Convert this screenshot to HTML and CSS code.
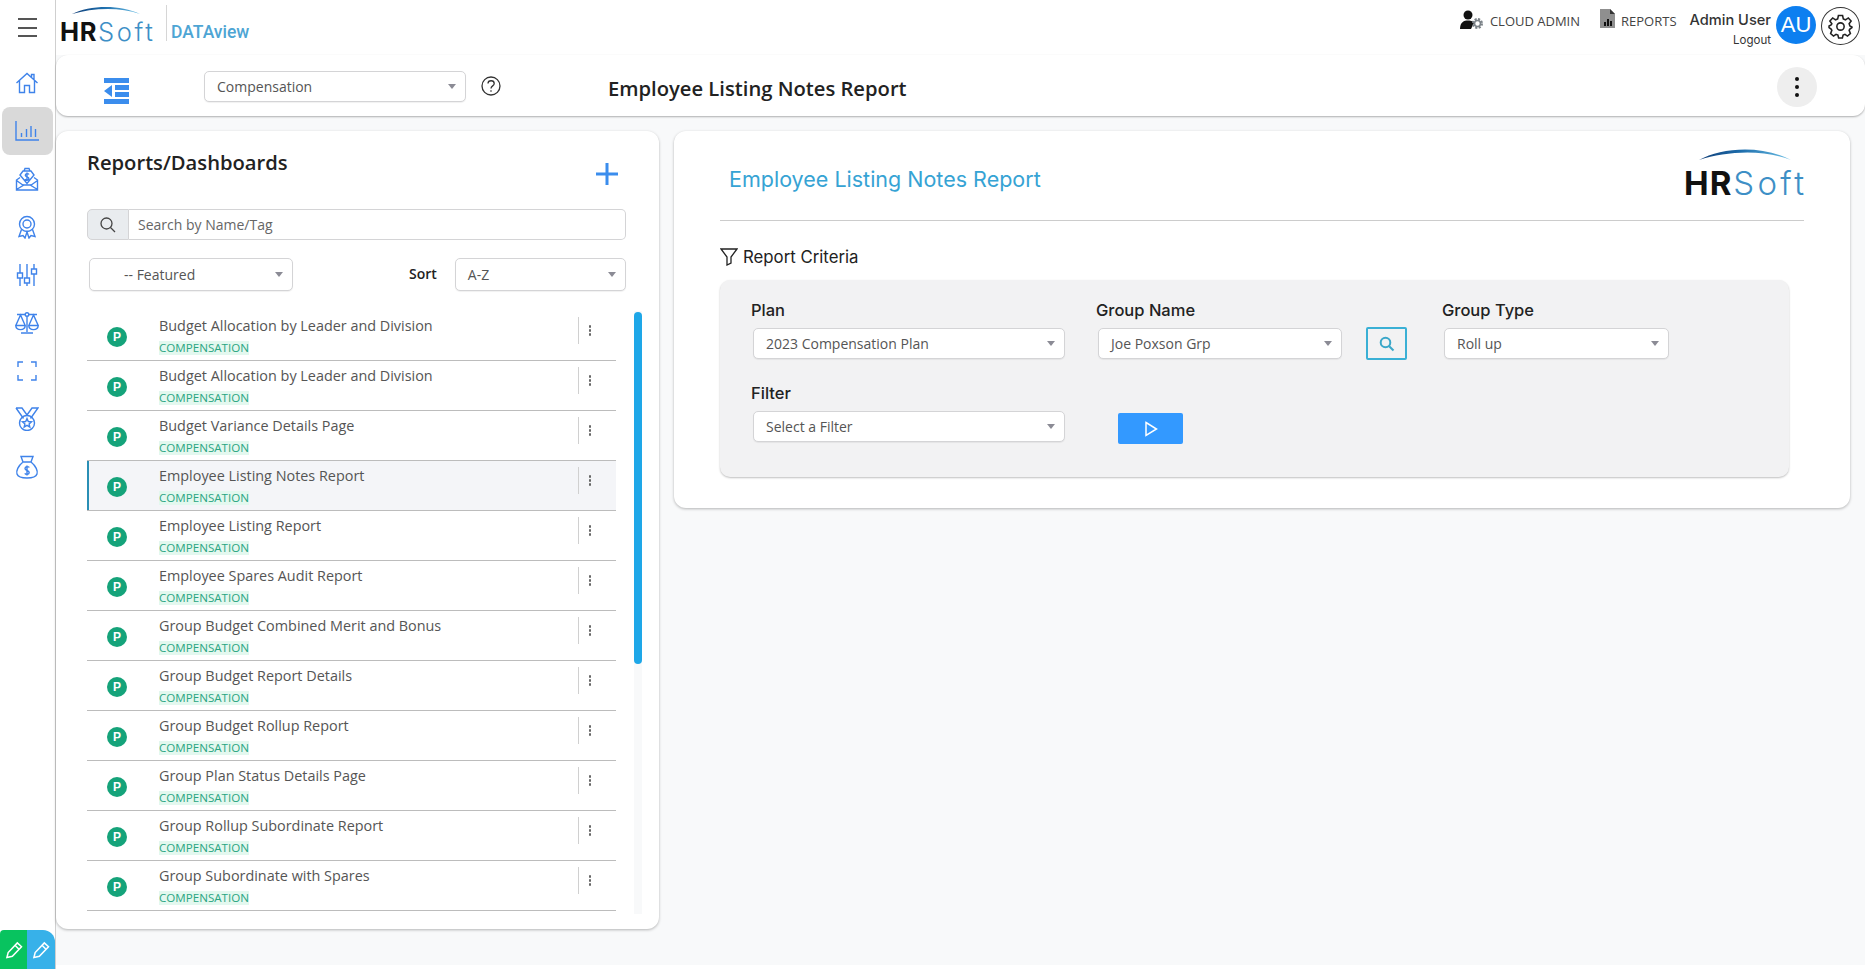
FILE: index.html
```html
<!DOCTYPE html>
<html lang="en">

<head>
    <meta charset="UTF-8">
    <title>HRSoft DATAview</title>
    <link rel="stylesheet" href="styles.css">
</head>

<body>
    <svg class="defs" width="0" height="0">
        <defs>
            <linearGradient id="arc" x1="0" x2="1" y1="0" y2="0">
                <stop offset="0" stop-color="#123f78" />
                <stop offset="0.45" stop-color="#1c6cab" />
                <stop offset="1" stop-color="#6cc0e6" />
            </linearGradient>
        </defs>
    </svg>

    <aside class="sidebar">
        <button class="hamburger"><span></span><span></span><span></span></button>
        <nav class="nav">
            <a class="nav-item">
                <svg viewBox="0 0 24 24"><path d="M1.5 12 12 2.5 22.5 12M4.5 9.5V21.5H9.5V14.5H14.5V21.5H19.5V9.5M16.5 6V3.5H19V8.2" /></svg>
            </a>
            <a class="nav-item active">
                <svg viewBox="0 0 24 24"><path d="M1 2V21H24M6.500 18V14M11.500 18V10M16 18V7M20.500 18V10" /></svg>
            </a>
            <a class="nav-item">
                <svg viewBox="0 0 24 24"><path d="M5 10.500 1.500 13V23H22.500V13L19 10.500M1.500 13.500 8.500 18.500M22.500 13.500 15.500 18.500M1.500 22.500 9 18H15L22.500 22.500M5 8 12 16.500 19 8 16 4H8ZM9 4 10 1.500H14L15 4M14 7.500C13.300 6.200 10.300 6.300 10.300 8.200S13.900 9.800 13.900 11.700 10.800 13.600 10 12.200M12 5.500V14" /></svg>
            </a>
            <a class="nav-item">
                <svg viewBox="0 0 24 24"><circle cx="12" cy="9" r="7.500" /><circle cx="12" cy="9" r="4" /><path d="M6.500 14.500 4 21.500 8 20.500 10 23 12 17 14 23 16 20.500 20 21.500 17.500 14.500" /></svg>
            </a>
            <a class="nav-item">
                <svg viewBox="0 0 24 24"><path d="M5 1V10M5 15V23M12 1V15M12 20V23M19 1V6M19 11V23M2.5 10H7.500V15H2.500ZM9.500 15H14.500V20H9.500ZM16.500 6H21.500V11H16.500Z" /></svg>
            </a>
            <a class="nav-item">
                <svg viewBox="0 0 24 24"><circle cx="12" cy="3.500" r="1.800" /><path d="M12 5.300V21M6 22H18M2 3.500H10M14 3.500H22M5.500 4 .8 14.500H10.200ZM18.500 4 13.800 14.500H23.200ZM.8 14.500C1 20 10 20 10.200 14.500M13.800 14.500C14 20 23 20 23.200 14.500" /></svg>
            </a>
            <a class="nav-item">
                <svg viewBox="0 0 24 24"><path d="M3 8V3H8M16 3H21V8M21 16V21H16M8 21H3V16" /></svg>
            </a>
            <a class="nav-item">
                <svg viewBox="0 0 24 24"><path d="M1 1H7L12 8 17 1H23L15.500 11.500M1 1 8.500 11.500" /><circle cx="12" cy="16" r="7.500" /><path d="M12 11.500 13.300 14.500 16.500 14.800 14.100 16.900 14.800 20 12 18.400 9.200 20 9.900 16.900 7.500 14.800 10.700 14.500Z" /></svg>
            </a>
            <a class="nav-item">
                <svg viewBox="0 0 24 24"><path d="M8 7 6 1.500H18L16 7M8 7H16M8 7C3 11 1 16 2 19S6 23 12 23 21 22 22 19 21 11 16 7M14.300 12.500C13.500 11.200 10 11.300 10 13.500S14.200 15.300 14.200 17.500 10.700 19.800 9.800 18.300M12 10.500V20.500" /></svg>
            </a>
        </nav>
        <div class="edit-buttons">
            <a class="edit-btn green">
                <svg viewBox="0 0 24 24"><path d="M3.500 21 5 15 16 3.500 21 8 10 19.500ZM13.500 6.500 18 11" /></svg>
            </a>
            <a class="edit-btn blue">
                <svg viewBox="0 0 24 24"><path d="M3.500 21 5 15 16 3.500 21 8 10 19.500ZM13.500 6.500 18 11" /></svg>
            </a>
        </div>
    </aside>

    <div class="page">
        <header class="topbar">
            <div class="brand">
                <div class="logo logo-small">
                    <svg class="logo-arc" viewBox="0 0 100 12" preserveAspectRatio="none"><path d="M0 12C25 -1 70 -3 100 12 70 1 30 3 0 12Z" fill="url(#arc)" /></svg>
                    <div class="logo-text"><b>HR</b><span>Soft</span></div>
                </div>
                <div class="brand-divider"></div>
                <div class="brand-name">DATAview</div>
            </div>
            <div class="top-links">
                <a class="top-link top-link-admin">
                    <svg class="icon-person" viewBox="0 0 24 20">
                        <circle cx="8" cy="5" r="4.500" fill="#111" />
                        <path d="M0 19C0 12 4 10.500 8 10.500S13 11.500 14 13L11 19Z" fill="#111" />
                        <circle cx="17.500" cy="13.500" r="4.200" fill="none" stroke="#7b8288" stroke-width="2.600" stroke-dasharray="2 1.300" />
                        <circle cx="17.500" cy="13.500" r="3" fill="none" stroke="#7b8288" stroke-width="1.600" />
                    </svg>
                    CLOUD ADMIN
                </a>
                <a class="top-link top-link-reports">
                    <svg class="icon-report" viewBox="0 0 15 19">
                        <path d="M0 0H10L15 5V19H0Z" fill="#8f8f8f" />
                        <path d="M10 0 15 5H10Z" fill="#333" />
                        <path d="M4 13H6V17H4ZM7 10H9V17H7ZM10 12H12V17H10Z" fill="#111" />
                    </svg>
                    REPORTS
                </a>
                <div class="user">
                    <div class="user-name">Admin User</div>
                    <div class="user-logout">Logout</div>
                </div>
                <div class="avatar">AU</div>
                <button class="gear">
                    <svg viewBox="0 0 24 24"><circle cx="12" cy="12" r="3.500" /><path d="M10 1.500H14L14.700 4.700 16.800 5.600 19.500 3.800 22.200 6.800 20.300 9.300 21 11.500 23 12.500V13L21 14.500 20.300 15.700 21.500 18.700 18.700 21.200 16.300 19.500 14.500 20.300 13.800 23H10.200L9.500 20.300 7.700 19.500 5.300 21.200 2.500 18.700 3.700 15.700 3 14.500 1 13V11.500L3 10.500 3.700 9.300 1.800 6.800 4.500 3.800 7.200 5.600 9.300 4.700Z" /></svg>
                </button>
            </div>
        </header>

        <div class="toolbar">
            <svg class="collapse-icon" viewBox="0 0 25 26"><path d="M0 0H25V5H0ZM11 7H25V12H11ZM11 14H25V19H11ZM0 21H25V26H0ZM8 7V19L0 13Z" /></svg>
            <div class="select toolbar-select"><span>Compensation</span><i class="caret"></i></div>
            <svg class="help-icon" viewBox="0 0 20 20"><circle cx="10" cy="10" r="9" /><path d="M7 7.500C7 3.800 13.200 3.800 13.200 7.500 13.200 10 10 9.800 10 12.500M10 14.300V15.800" /></svg>
            <h1 class="toolbar-title">Employee Listing Notes Report</h1>
            <button class="kebab-round"><span></span><span></span><span></span></button>
        </div>

        <main class="content">
            <section class="panel reports">
                <div class="reports-head">
                    <h2>Reports/Dashboards</h2>
                    <svg class="plus-icon" viewBox="0 0 22 22"><path d="M11 0V22M0 11H22" /></svg>
                </div>
                <div class="search">
                    <div class="search-addon">
                        <svg viewBox="0 0 16 16"><circle cx="6.500" cy="6.500" r="5.500" /><path d="M10.500 10.500 15 15" /></svg>
                    </div>
                    <div class="search-input">Search by Name/Tag</div>
                </div>
                <div class="filters">
                    <div class="select featured"><span>-- Featured</span><i class="caret"></i></div>
                    <div class="sort-label">Sort</div>
                    <div class="select sort"><span>A-Z</span><i class="caret"></i></div>
                </div>
                <div class="list-wrap">
                    <ul class="list">
                        <li class="row"><span class="badge">P</span><div class="row-text"><div class="row-name">Budget Allocation by Leader and Division</div><span class="tag">COMPENSATION</span></div><div class="row-menu"><i></i><i></i><i></i></div></li>
                        <li class="row"><span class="badge">P</span><div class="row-text"><div class="row-name">Budget Allocation by Leader and Division</div><span class="tag">COMPENSATION</span></div><div class="row-menu"><i></i><i></i><i></i></div></li>
                        <li class="row"><span class="badge">P</span><div class="row-text"><div class="row-name">Budget Variance Details Page</div><span class="tag">COMPENSATION</span></div><div class="row-menu"><i></i><i></i><i></i></div></li>
                        <li class="row selected"><span class="badge">P</span><div class="row-text"><div class="row-name">Employee Listing Notes Report</div><span class="tag">COMPENSATION</span></div><div class="row-menu"><i></i><i></i><i></i></div></li>
                        <li class="row"><span class="badge">P</span><div class="row-text"><div class="row-name">Employee Listing Report</div><span class="tag">COMPENSATION</span></div><div class="row-menu"><i></i><i></i><i></i></div></li>
                        <li class="row"><span class="badge">P</span><div class="row-text"><div class="row-name">Employee Spares Audit Report</div><span class="tag">COMPENSATION</span></div><div class="row-menu"><i></i><i></i><i></i></div></li>
                        <li class="row"><span class="badge">P</span><div class="row-text"><div class="row-name">Group Budget Combined Merit and Bonus</div><span class="tag">COMPENSATION</span></div><div class="row-menu"><i></i><i></i><i></i></div></li>
                        <li class="row"><span class="badge">P</span><div class="row-text"><div class="row-name">Group Budget Report Details</div><span class="tag">COMPENSATION</span></div><div class="row-menu"><i></i><i></i><i></i></div></li>
                        <li class="row"><span class="badge">P</span><div class="row-text"><div class="row-name">Group Budget Rollup Report</div><span class="tag">COMPENSATION</span></div><div class="row-menu"><i></i><i></i><i></i></div></li>
                        <li class="row"><span class="badge">P</span><div class="row-text"><div class="row-name">Group Plan Status Details Page</div><span class="tag">COMPENSATION</span></div><div class="row-menu"><i></i><i></i><i></i></div></li>
                        <li class="row"><span class="badge">P</span><div class="row-text"><div class="row-name">Group Rollup Subordinate Report</div><span class="tag">COMPENSATION</span></div><div class="row-menu"><i></i><i></i><i></i></div></li>
                        <li class="row"><span class="badge">P</span><div class="row-text"><div class="row-name">Group Subordinate with Spares</div><span class="tag">COMPENSATION</span></div><div class="row-menu"><i></i><i></i><i></i></div></li>
                    </ul>
                    <div class="scroll-track"><div class="scroll-thumb"></div></div>
                </div>
            </section>

            <section class="panel report">
                <div class="report-head">
                    <h2>Employee Listing Notes Report</h2>
                    <div class="logo logo-large">
                        <svg class="logo-arc" viewBox="0 0 100 12" preserveAspectRatio="none"><path d="M0 12C25 -1 70 -3 100 12 70 1 30 3 0 12Z" fill="url(#arc)" /></svg>
                        <div class="logo-text"><b>HR</b><span>Soft</span></div>
                    </div>
                </div>
                <div class="criteria-title">
                    <svg viewBox="0 0 18 18"><path d="M1 1H17L11 9V15L7 17V9Z" /></svg>
                    Report Criteria
                </div>
                <div class="criteria">
                    <div class="criteria-row">
                        <div class="field field-plan">
                            <label>Plan</label>
                            <div class="select"><span>2023 Compensation Plan</span><i class="caret"></i></div>
                        </div>
                        <div class="field field-group">
                            <label>Group Name</label>
                            <div class="select"><span>Joe Poxson Grp</span><i class="caret"></i></div>
                        </div>
                        <button class="search-btn">
                            <svg viewBox="0 0 16 16"><circle cx="6.500" cy="6.500" r="4.800" /><path d="M10.200 10.200 14.500 14.500" /></svg>
                        </button>
                        <div class="field field-type">
                            <label>Group Type</label>
                            <div class="select"><span>Roll up</span><i class="caret"></i></div>
                        </div>
                    </div>
                    <div class="criteria-row criteria-row-second">
                        <div class="field field-plan">
                            <label>Filter</label>
                            <div class="select"><span>Select a Filter</span><i class="caret"></i></div>
                        </div>
                        <button class="run-btn">
                            <svg viewBox="0 0 14 16"><path d="M2 1.500 12.500 8 2 14.500Z" /></svg>
                        </button>
                    </div>
                </div>
            </section>
        </main>
    </div>
</body>

</html>
```

FILE: styles.css
```css
* {
    box-sizing: border-box;
}

html,
body {
    height: 969px;
    margin: 0;
    overflow: hidden;
}

body {
    background-color: #fff;
    color: #222;
    display: flex;
    font-family: "Open Sans", Arial, sans-serif;
    font-size: 14px;
}

h1,
h2,
ul {
    margin: 0;
    padding: 0;
}

button {
    background: none;
    border: 0;
    padding: 0;
}

.defs {
    position: absolute;
}

/* sidebar */
.sidebar {
    border-right: 1px solid #cfcfcf;
    display: flex;
    flex: 0 0 56px;
    flex-direction: column;
    height: 969px;
}

.hamburger {
    display: flex;
    flex-direction: column;
    gap: 6.500px;
    height: 59px;
    margin-left: 18px;
    padding-top: 18px;
    width: 19px;
}

.hamburger span {
    background-color: #555;
    display: block;
    height: 2px;
    width: 19px;
}

.nav {
    display: flex;
    flex-direction: column;
}

.nav-item {
    align-items: center;
    border-radius: 8px;
    display: flex;
    height: 48px;
    justify-content: center;
    margin: 0 2px;
    width: 51px;
}

.nav-item.active {
    background-color: #d9d9d9;
}

.nav-item svg {
    fill: none;
    height: 24px;
    margin-right: 2px;
    stroke: #3f83ea;
    stroke-width: 1.400;
    width: 24px;
}

.edit-buttons {
    display: flex;
    height: 39px;
    margin-top: auto;
    width: 55px;
}

.edit-btn {
    align-items: center;
    display: flex;
    flex: 0 0 27px;
    justify-content: center;
}

.edit-btn svg {
    fill: none;
    height: 20px;
    stroke: #fff;
    stroke-width: 1.800;
    width: 20px;
}

.edit-btn.green {
    background-color: #08c35f;
    border-top-left-radius: 4px;
}

.edit-btn.blue {
    background-color: #37b1e9;
    border-top-right-radius: 12px;
    flex-basis: 28px;
}

/* header */
.page {
    background-color: #f8f9fa;
    display: flex;
    flex: 1;
    flex-direction: column;
    height: 965px;
    min-width: 0;
}

.topbar {
    align-items: flex-start;
    background-color: #fff;
    display: flex;
    flex: 0 0 55px;
    justify-content: space-between;
}

.brand {
    align-items: flex-start;
    display: flex;
    padding-left: 4px;
}

.logo {
    display: flex;
    flex-direction: column;
}

.logo-small {
    padding-top: 6px;
    width: 95px;
}

.logo-small .logo-arc {
    height: 8px;
    margin-left: 12px;
    width: 68px;
}

.logo-small .logo-text {
    font-size: 25.500px;
    line-height: 29px;
    margin-top: 3px;
}

.logo-large {
    width: 120px;
}

.logo-large .logo-arc {
    height: 12px;
    margin-left: 15px;
    width: 92px;
}

.logo-large .logo-text {
    font-size: 33px;
    line-height: 40px;
    margin-top: 3px;
}

.logo-arc {
    display: block;
}

.logo-text {
    display: flex;
    font-family: Inter, Arial, sans-serif;
    white-space: nowrap;
}

.logo-text b {
    color: #111;
    font-weight: 700;
    letter-spacing: .03em;
}

.logo-text span {
    color: #3d8fc6;
    font-weight: 300;
    letter-spacing: .1em;
    margin-left: .03em;
}

.brand-divider {
    background-color: #d6d6d6;
    height: 36px;
    margin: 5px 0 0 11px;
    width: 1px;
}

.brand-name {
    color: #4ea5d4;
    font-family: Roboto, Arial, sans-serif;
    font-size: 17.500px;
    font-weight: 500;
    line-height: 22px;
    margin: 21px 0 0 4px;
}

.top-links {
    align-items: flex-start;
    display: flex;
    padding-right: 5px;
}

.top-link {
    align-items: center;
    color: #444;
    display: flex;
    font-size: 13px;
    gap: 6px;
    height: 20px;
    margin-top: 11px;
}

.icon-person {
    height: 20px;
    margin-top: -3px;
    width: 24px;
}

.icon-report {
    height: 19px;
    margin-top: -5px;
    width: 15px;
}

.top-link-reports {
    margin-left: 20px;
}

.user {
    font-family: Inter, Arial, sans-serif;
    margin-left: 13px;
    text-align: right;
}

.user-name {
    color: #333;
    font-size: 14.600px;
    font-weight: 500;
    line-height: 20px;
    margin-top: 10px;
    white-space: nowrap;
}

.user-logout {
    color: #333;
    font-size: 11.500px;
    line-height: 16px;
    margin-top: 2px;
}

.avatar {
    align-items: center;
    background-color: #0d7ff0;
    border-radius: 50%;
    color: #fff;
    display: flex;
    font-family: Arial, "Liberation Sans", sans-serif;
    font-size: 22px;
    height: 38px;
    justify-content: center;
    margin: 6px 0 0 5px;
    width: 40px;
}

.gear {
    align-items: center;
    border: 1px solid #333;
    border-radius: 50%;
    display: flex;
    height: 38px;
    justify-content: center;
    margin: 7px 0 0 5px;
    width: 39px;
}

.gear svg {
    fill: none;
    height: 25px;
    stroke: #222;
    stroke-width: 1.500;
    width: 25px;
}

/* toolbar */
.toolbar {
    align-items: center;
    background-color: #fff;
    border-radius: 12px;
    box-shadow: 0 1px 2px rgba(0, 0, 0, .3);
    display: flex;
    flex: 0 0 61px;
    padding: 2px 48px 0 48px;
}

.collapse-icon {
    fill: #3b8ded;
    height: 26px;
    margin-top: 9px;
    width: 25px;
}

.select {
    align-items: center;
    background-color: #fff;
    border: 1px solid #d4d4d6;
    border-radius: 5px;
    box-shadow: 0 1px 1px rgba(0, 0, 0, .06);
    color: #555;
    display: flex;
    height: 31px;
    justify-content: space-between;
    padding: 0 9px 0 12px;
}

.caret {
    border-left: 4.500px solid transparent;
    border-right: 4.500px solid transparent;
    border-top: 5px solid #8b8b95;
    display: block;
    height: 0;
    width: 0;
}

.toolbar-select {
    margin-left: 75px;
    width: 262px;
}

.help-icon {
    fill: none;
    height: 20px;
    margin-left: 15px;
    margin-top: -2px;
    stroke: #333;
    stroke-width: 1.300;
    width: 20px;
}

.toolbar-title {
    color: #222;
    flex: 1;
    font-size: 20.200px;
    font-weight: 600;
    margin: 3px 0 0 107px;
}

.kebab-round {
    align-items: center;
    background-color: #eee;
    border-radius: 50%;
    display: flex;
    flex-direction: column;
    gap: 4px;
    height: 40px;
    justify-content: center;
    width: 40px;
}

.kebab-round span {
    background-color: #111;
    border-radius: 50%;
    height: 4px;
    width: 4px;
}

/* panels */
.content {
    align-items: flex-start;
    display: flex;
    gap: 15px;
    padding-top: 15px;
}

.panel {
    background-color: #fff;
    border-radius: 12px;
    box-shadow: 0 1px 3px rgba(0, 0, 0, .28);
}

.reports {
    flex: 0 0 603px;
    height: 798px;
    padding: 0 17px 0 31px;
}

.reports-head {
    display: flex;
    height: 78px;
    justify-content: space-between;
    padding: 17px 24px 0 0;
}

.reports-head h2 {
    font-size: 20.200px;
    font-weight: 600;
    line-height: 28px;
}

.plus-icon {
    fill: none;
    height: 22px;
    margin-top: 15px;
    stroke: #3b8ded;
    stroke-width: 3;
    width: 22px;
}

.search {
    display: flex;
    height: 31px;
    width: 539px;
}

.search-addon {
    align-items: center;
    background-color: #e9ecef;
    border: 1px solid #d4d4d6;
    border-radius: 5px 0 0 5px;
    display: flex;
    justify-content: center;
    width: 42px;
}

.search-addon svg {
    fill: none;
    height: 16px;
    stroke: #444;
    stroke-width: 1.300;
    width: 16px;
}

.search-input {
    align-items: center;
    border: 1px solid #d4d4d6;
    border-left: 0;
    border-radius: 0 5px 5px 0;
    color: #666;
    display: flex;
    flex: 1;
    padding-left: 9px;
}

.filters {
    align-items: center;
    display: flex;
    height: 33px;
    margin-top: 18px;
    padding-left: 2px;
    width: 539px;
}

.filters .select {
    height: 33px;
}

.featured {
    padding-left: 34px;
    width: 204px;
}

.sort-label {
    font-weight: 600;
    margin-left: 116px;
    margin-top: -3px;
}

.sort {
    margin-left: 18px;
    width: 171px;
}

.list-wrap {
    display: flex;
    height: 603px;
    margin-top: 20px;
}

.list {
    flex: 0 0 529px;
    list-style: none;
    overflow: hidden;
}

.row {
    border-bottom: 1px solid #bcbcbc;
    display: flex;
    height: 50px;
    padding-left: 20px;
}

.row.selected {
    background-color: #f4f5f8;
    box-shadow: inset 2px 0 0 #2a8fb5;
}

.badge {
    align-items: center;
    background-color: #15a37a;
    border-radius: 50%;
    color: #fff;
    display: flex;
    flex: 0 0 20px;
    font-family: Arial, "Liberation Sans", sans-serif;
    font-size: 12px;
    font-weight: 700;
    height: 20px;
    justify-content: center;
    margin-top: 16px;
}

.row-text {
    flex: 1;
    margin-left: 32px;
    min-width: 0;
}

.row-name {
    color: #555;
    font-size: 14.400px;
    line-height: 20px;
    margin-top: 5px;
}

.tag {
    background-color: #e3f8ef;
    color: #2aa582;
    display: inline-block;
    font-size: 11.600px;
    line-height: 14px;
    margin-top: 5px;
    vertical-align: top;
}

.row-menu {
    align-items: center;
    border-left: 1px solid #d0d0d0;
    display: flex;
    flex: 0 0 38px;
    flex-direction: column;
    gap: 1.500px;
    height: 27px;
    justify-content: center;
    margin-top: 6px;
    padding-right: 15px;
}

.row-menu i {
    background-color: #666;
    border-radius: 50%;
    display: block;
    height: 2.500px;
    width: 2.500px;
}

.scroll-track {
    background-color: #f8f9fa;
    flex: 0 0 8px;
    margin-left: 18px;
}

.scroll-thumb {
    background-color: #1ea7e8;
    border-radius: 4px;
    height: 352px;
    margin-top: 1px;
}

/* report panel */
.report {
    flex: 0 0 1176px;
    height: 377px;
    padding: 0 46px 0 46px;
}

.report-head {
    align-items: flex-start;
    border-bottom: 1px solid #ccc;
    display: flex;
    height: 90px;
    justify-content: space-between;
}

.report-head h2 {
    color: #36a3d4;
    font-family: Inter, Arial, sans-serif;
    font-size: 21.500px;
    font-weight: 400;
    line-height: 30px;
    margin: 33px 0 0 9px;
}

.logo-large {
    padding-top: 17px;
}

.criteria-title {
    align-items: center;
    color: #222;
    display: flex;
    font-family: Inter, Arial, sans-serif;
    font-size: 16.800px;
    gap: 5px;
    height: 24px;
    margin-top: 24px;
}

.criteria-title svg {
    fill: none;
    height: 18px;
    stroke: #222;
    stroke-width: 1.300;
    width: 18px;
}

.criteria {
    background-color: #f2f2f3;
    border-radius: 10px;
    box-shadow: 0 1px 2px rgba(0, 0, 0, .25);
    height: 197px;
    margin-top: 11px;
    padding: 19px 0 0 31px;
    width: 1069px;
}

.criteria-row {
    align-items: flex-start;
    display: flex;
}

.criteria-row-second {
    margin-top: 22px;
}

.field label {
    color: #222;
    display: block;
    font-family: Inter, Arial, sans-serif;
    font-size: 16.500px;
    font-weight: 500;
    line-height: 22px;
    margin-bottom: 7px;
}

.field .select {
    margin-left: 2px;
}

.field-plan {
    flex: 0 0 345px;
}

.field-plan .select {
    width: 312px;
}

.field-group {
    flex: 0 0 270px;
}

.field-group .select {
    width: 244px;
}

.field-type {
    margin-left: 35px;
}

.field-type .select {
    width: 225px;
}

.search-btn {
    align-items: center;
    border: 2px solid #3ab0d5;
    border-radius: 2px;
    display: flex;
    height: 33px;
    justify-content: center;
    margin-top: 28px;
    width: 41px;
}

.search-btn svg {
    fill: none;
    height: 16px;
    stroke: #3aa7c9;
    stroke-width: 2;
    width: 16px;
}

.run-btn {
    align-items: center;
    background-color: #3399ff;
    border-radius: 2px;
    display: flex;
    height: 31px;
    justify-content: center;
    margin: 31px 0 0 22px;
    width: 65px;
}

.run-btn svg {
    fill: none;
    height: 16px;
    stroke: #fff;
    stroke-width: 1.500;
    width: 14px;
}
```
